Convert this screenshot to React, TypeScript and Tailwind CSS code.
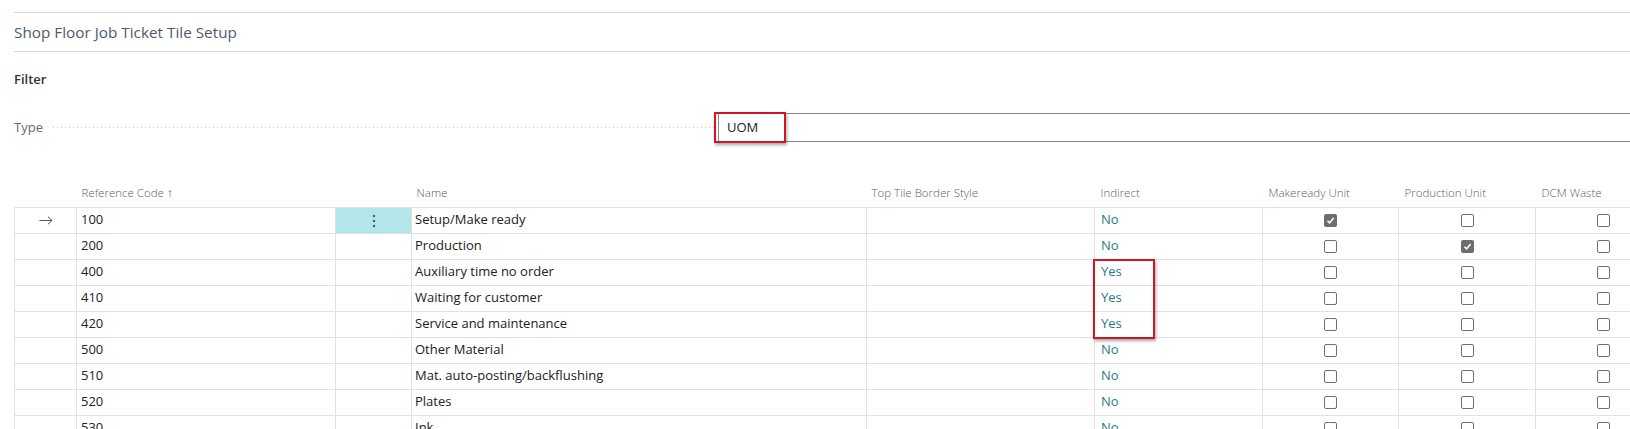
import React from "react";

type Row = {
  code: string;
  name: string;
  indirect: "Yes" | "No";
  makeready: boolean;
  production: boolean;
  dcm: boolean;
};

const rows: Row[] = [
  { code: "100", name: "Setup/Make ready", indirect: "No", makeready: true, production: false, dcm: false },
  { code: "200", name: "Production", indirect: "No", makeready: false, production: true, dcm: false },
  { code: "400", name: "Auxiliary time no order", indirect: "Yes", makeready: false, production: false, dcm: false },
  { code: "410", name: "Waiting for customer", indirect: "Yes", makeready: false, production: false, dcm: false },
  { code: "420", name: "Service and maintenance", indirect: "Yes", makeready: false, production: false, dcm: false },
  { code: "500", name: "Other Material", indirect: "No", makeready: false, production: false, dcm: false },
  { code: "510", name: "Mat. auto-posting/backflushing", indirect: "No", makeready: false, production: false, dcm: false },
  { code: "520", name: "Plates", indirect: "No", makeready: false, production: false, dcm: false },
  { code: "530", name: "Ink", indirect: "No", makeready: false, production: false, dcm: false },
];

const Check = ({ on }: { on: boolean }) =>
  on ? (
    <span className="inline-flex w-[13px] h-[13px] rounded-[2px] bg-[#6e6e6e] items-center justify-center align-middle">
      <svg width="9" height="9" viewBox="0 0 9 9">
        <path d="M1.5 4.8 L3.6 6.9 L7.6 1.9" fill="none" stroke="#fff" strokeWidth="1.6" />
      </svg>
    </span>
  ) : (
    <span className="inline-block w-[13px] h-[13px] rounded-[2px] border border-[#707070] bg-white align-middle" />
  );

const cell = "border border-[#e1e1e1] h-[26px] truncate";

const App = () => {
  return (
    <div className="relative w-[1630px] h-[429px] overflow-hidden bg-white font-['Open_Sans',sans-serif] text-[#212121]">
      {/* header */}
      <div className="pl-[14px] pt-[12px]">
        <div className="border-t border-[#d6d6d6] h-[39px] flex items-center text-[15.3px] font-medium text-[#4f5a6b]">
          Shop Floor Job Ticket Tile Setup
        </div>
        <div className="border-t border-[#d6d6d6]" />

        <div className="mt-[18px] h-[20px] flex items-center text-[13px] font-semibold text-[#333]">Filter</div>

        <div className="mt-[22px] h-[31px] flex items-center">
          <div className="w-[700px] flex items-center">
            <span className="text-[13px] text-[#6b6b6b]">Type</span>
            <span className="flex-1 ml-[10px] h-px bg-[linear-gradient(to_right,#c4c4c4_1px,transparent_1px)] bg-[length:4px_1px] bg-repeat-x" />
          </div>
          <div className="ml-[4px] flex-1 h-[29px] border border-r-0 border-[#8a8886] flex items-center pl-[8px] text-[13px]">
            UOM
          </div>
        </div>
      </div>

      {/* table */}
      <div className="ml-[14px] mt-[35px]">
        <table className="table-fixed border-collapse w-[1657px] text-[13px]">
          <colgroup>
            <col className="w-[62px]" />
            <col className="w-[259px]" />
            <col className="w-[76px]" />
            <col className="w-[455px]" />
            <col className="w-[228px]" />
            <col className="w-[168px]" />
            <col className="w-[136px]" />
            <col className="w-[137px]" />
            <col className="w-[136px]" />
          </colgroup>
          <thead>
            <tr className="h-[29px] text-[11.5px] text-[#605e5c] text-left">
              <th className="font-light" />
              <th className="font-light px-[5px]">Reference Code <span className="text-[13px]">↑</span></th>
              <th className="font-light" />
              <th className="font-light px-[5px]">Name</th>
              <th className="font-light px-[5px]">Top Tile Border Style</th>
              <th className="font-light px-[6px]">Indirect</th>
              <th className="font-light px-[6px]">Makeready Unit</th>
              <th className="font-light px-[6px]">Production Unit</th>
              <th className="font-light px-[6px]">DCM Waste</th>
            </tr>
          </thead>
          <tbody>
            {rows.map((r, i) => (
              <tr key={r.code}>
                <td className={`${cell} text-center`}>
                  {i === 0 && (
                    <svg width="14" height="9" viewBox="0 0 14 9" className="inline-block align-middle">
                      <path d="M0.5 4.5 H13 M9 0.8 L13 4.5 L9 8.2" fill="none" stroke="#555" strokeWidth="1" />
                    </svg>
                  )}
                </td>
                <td className={`${cell} px-[4px]`}>{r.code}</td>
                <td className={`${cell} text-center ${i === 0 ? "bg-[#b3e6e9]" : ""}`}>
                  {i === 0 && (
                    <svg width="4" height="14" viewBox="0 0 4 14" className="inline-block align-middle">
                      <circle cx="2" cy="2" r="1.2" fill="#2a6a70" />
                      <circle cx="2" cy="7" r="1.2" fill="#2a6a70" />
                      <circle cx="2" cy="12" r="1.2" fill="#2a6a70" />
                    </svg>
                  )}
                </td>
                <td className={`${cell} px-[3px]`}>{r.name}</td>
                <td className={cell} />
                <td className={`${cell} px-[6px] text-[#2b7a80]`}>{r.indirect}</td>
                <td className={`${cell} text-center`}>
                  <Check on={r.makeready} />
                </td>
                <td className={`${cell} text-center`}>
                  <Check on={r.production} />
                </td>
                <td className={`${cell} text-center`}>
                  <Check on={r.dcm} />
                </td>
              </tr>
            ))}
          </tbody>
        </table>
      </div>

      {/* highlight boxes */}
      <div className="absolute left-[714px] top-[112px] w-[72px] h-[31px] border-2 border-[#d0161e] shadow-[1px_2px_3px_rgba(0,0,0,0.35)]" />
      <div className="absolute left-[1093px] top-[259px] w-[62px] h-[80px] border-2 border-[#d0161e] shadow-[1px_2px_3px_rgba(0,0,0,0.35)]" />
    </div>
  );
};

export default App;
